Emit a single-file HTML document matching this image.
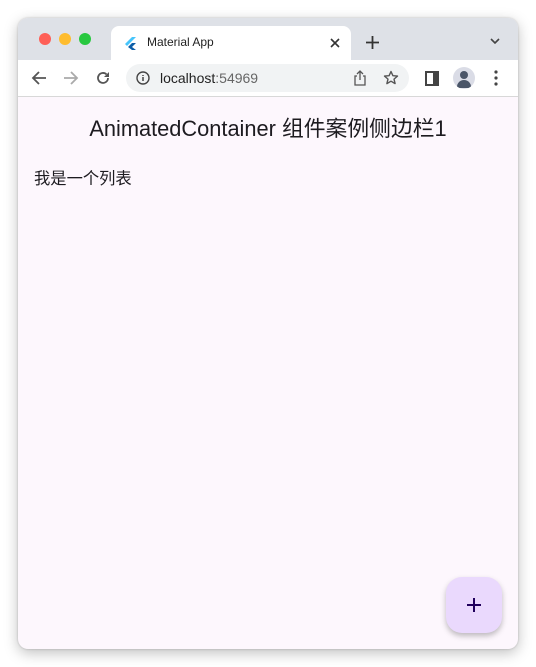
<!DOCTYPE html>
<html><head><style>
body{margin:0;width:536px;height:667px;background:#fff;position:relative;overflow:hidden;font-family:"Liberation Sans","Noto Sans CJK SC",sans-serif}
.win{position:absolute;left:18px;top:18px;width:500px;height:631px;border-radius:10px;overflow:hidden;box-shadow:0 4px 14px rgba(0,0,0,.25),0 0 2px rgba(0,0,0,.2);background:#fdf7fd}
.tabbar{position:absolute;left:0;top:0;width:500px;height:42px;background:#dee1e7}
.dot{position:absolute;top:15px;width:12px;height:12px;border-radius:50%}
.tab{position:absolute;left:93px;top:8px;width:240px;height:34px;background:#fff;border-radius:8px 8px 0 0}
.addr{position:absolute;left:0;top:42px;width:500px;height:36px;background:#fff;border-bottom:1px solid #d8d8d8}
.url{position:absolute;left:108px;top:4px;width:283px;height:28px;border-radius:14px;background:#f1f3f4}
.t{position:absolute;white-space:nowrap}
</style></head><body>
<div class="win">
<div class="tabbar">
<div class="dot" style="left:21px;background:#fe5f57"></div>
<div class="dot" style="left:41px;background:#febc2e"></div>
<div class="dot" style="left:61px;background:#28c840"></div>
<div class="tab">
<svg style="position:absolute;left:14px;top:11px" width="11" height="13" viewBox="0 0 11 13"><path d="M7 0L0 7l2 2 9-9z" fill="#47c5fb"/><path d="M7 6L3 10l4 3h4L7 10l4-4z" fill="#0d5ea8"/></svg>
<div class="t" style="left:36px;top:9px;font-size:12px;color:#222">Material App</div>
<svg style="position:absolute;left:219px;top:12px" width="10" height="10"><path d="M1 1l8 8M9 1l-8 8" stroke="#333" stroke-width="1.6"/></svg>
</div>
<svg style="position:absolute;left:348px;top:18px" width="13" height="13"><path d="M6.5 0v13M0 6.5h13" stroke="#333" stroke-width="1.8"/></svg>
<svg style="position:absolute;left:472px;top:20px" width="10" height="6"><path d="M1 1l4 4 4-4" stroke="#444" stroke-width="1.6" fill="none"/></svg>
</div>
<div class="addr">
<svg style="position:absolute;left:13px;top:10px" width="16" height="16"><path d="M15 8H2M8 2L2 8l6 6" stroke="#555" stroke-width="1.8" fill="none"/></svg>
<svg style="position:absolute;left:45px;top:10px" width="16" height="16"><path d="M1 8h13M8 2l6 6-6 6" stroke="#aaa" stroke-width="1.8" fill="none"/></svg>
<svg style="position:absolute;left:77px;top:10px" width="16" height="16"><path d="M13 8a5 5 0 1 1-1.5-3.6" stroke="#555" stroke-width="1.8" fill="none"/><path d="M14 2v5h-5z" fill="#555"/></svg>
<div class="url">
<svg style="position:absolute;left:10px;top:7px" width="14" height="14"><circle cx="7" cy="7" r="6" stroke="#444" stroke-width="1.4" fill="none"/><path d="M7 6v4M7 4v1" stroke="#444" stroke-width="1.5"/></svg>
<div class="t" style="left:34px;top:6px;font-size:14px;color:#222">localhost<span style="color:#666">:54969</span></div>
<svg style="position:absolute;left:227px;top:6px" width="14" height="16"><path d="M4 6H2v9h10V6h-2M7 1v9M4 4l3-3 3 3" stroke="#555" stroke-width="1.3" fill="none"/></svg>
<svg style="position:absolute;left:257px;top:6px" width="16" height="16" viewBox="0 0 16 16"><path d="M8 1.5l1.9 4.2 4.6.4-3.5 3 1.1 4.5L8 11.2 3.9 13.6 5 9.1 1.5 6.1l4.6-.4z" stroke="#555" stroke-width="1.4" fill="none" stroke-linejoin="round"/></svg>
</div>
<div style="position:absolute;left:407px;top:11px;width:10px;height:11px;border:2px solid #444;background:linear-gradient(90deg,#fff 60%,#444 60%)"></div>
<div style="position:absolute;left:435px;top:7px;width:22px;height:22px;border-radius:50%;background:#dadce6;overflow:hidden"><div style="position:absolute;left:7px;top:4px;width:8px;height:8px;border-radius:50%;background:#4a5568"></div><div style="position:absolute;left:4px;top:13px;width:14px;height:8px;border-radius:7px 7px 0 0;background:#4a5568"></div></div>
<svg style="position:absolute;left:476px;top:10px" width="4" height="16"><circle cx="2" cy="2" r="1.6" fill="#444"/><circle cx="2" cy="8" r="1.6" fill="#444"/><circle cx="2" cy="14" r="1.6" fill="#444"/></svg>
</div>
<div class="t" style="left:0;width:500px;text-align:center;top:94px;font-size:21.8px;color:#1d1b20">AnimatedContainer 组件案例侧边栏1</div>
<div class="t" style="left:16px;top:147px;font-size:16.3px;color:#1d1b20">我是一个列表</div>
<div style="position:absolute;left:428px;top:559px;width:56px;height:56px;border-radius:16px;background:#ead9fd;box-shadow:0 3px 6px rgba(0,0,0,.25)">
<svg style="position:absolute;left:21px;top:21px" width="14" height="14"><path d="M7 0v14M0 7h14" stroke="#21005d" stroke-width="2"/></svg>
</div>
</div>
</body></html>
